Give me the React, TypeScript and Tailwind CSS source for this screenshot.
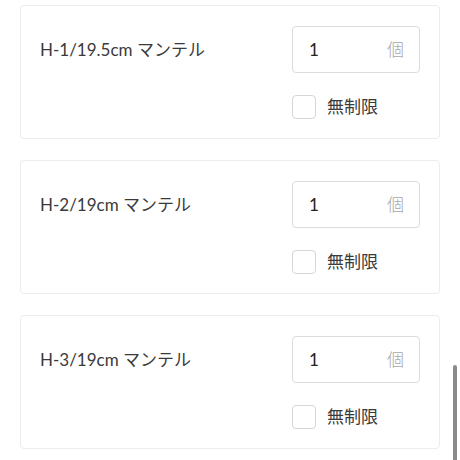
const items = [
  { id: 'h1', label: 'H-1/19.5cm マンテル' },
  { id: 'h2', label: 'H-2/19cm マンテル' },
  { id: 'h3', label: 'H-3/19cm マンテル' },
];

function ItemRow({ label }: { label: string }) {
  return (
    <div className="flex items-start justify-between h-[134px] rounded-[4px] border border-[#ececec] bg-white px-[19px] pt-[20px]">
      <div className="h-[47px] flex items-center text-[17px] text-[#3a3a3a]">{label}</div>
      <div className="flex flex-col w-[128px]">
        <div className="h-[47px] flex items-center justify-between rounded-[4px] border border-[#dcdcdc] pl-[16px] pr-[15px]">
          <span className="text-[17px] text-[#222]">1</span>
          <span className="text-[17px] font-light text-[#a8a8a8]">個</span>
        </div>
        <label className="mt-[21px] flex items-center gap-[11px]">
          <span className="w-[24px] h-[24px] rounded-[4px] border border-[#d6d6d6] bg-white" />
          <span className="text-[17px] text-[#3a3a3a]">無制限</span>
        </label>
      </div>
    </div>
  );
}

export default function App() {
  return (
    <div className="relative w-[460px] h-[460px] overflow-hidden bg-white font-['Lato','Noto_Sans_CJK_JP',sans-serif]">
      <div className="flex flex-col gap-[21px] pl-[20px] pr-[20px] pt-[5px]">
        {items.map(it => (
          <ItemRow key={it.id} label={it.label} />
        ))}
      </div>
      <div className="absolute left-[453px] top-[365px] w-[4px] h-[100px] rounded-[2px] bg-[#8a8a8a]" />
    </div>
  );
}
